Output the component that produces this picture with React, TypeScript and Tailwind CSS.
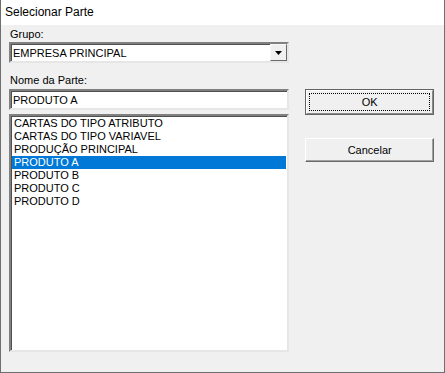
const items = [
  'CARTAS DO TIPO ATRIBUTO',
  'CARTAS DO TIPO VARIAVEL',
  'PRODUÇÃO PRINCIPAL',
  'PRODUTO A',
  'PRODUTO B',
  'PRODUTO C',
  'PRODUTO D'
];

const selected = 'PRODUTO A';

// classic sunken 3D edge
const sunken =
  'border-2 border-t-[#808080] border-l-[#808080] border-b-[#e6e6e6] border-r-[#e6e6e6] shadow-[inset_1px_1px_0_#505050]';

export default function App() {
  return (
    <div className="w-[445px] h-[373px] flex flex-col bg-[#f0f0f0] border-x border-b border-[#6e6e6e] text-[11px] text-black font-['Liberation_Sans',Arial,sans-serif] leading-[13px]">
      {/* Title bar */}
      <div className="h-[25px] bg-white flex items-center pl-[4px] text-[12px]">
        Selecionar Parte
      </div>

      <div className="flex flex-1 pl-[8px] pr-[10px]">
        {/* Left column */}
        <div className="w-[281px] flex flex-col">
          <div className="mt-[3px] h-[14px] pl-[1px]">Grupo:</div>
          <div className={`${sunken} h-[21px] bg-white flex items-center`}>
            <span className="flex-1 pl-[2px] pt-[1px]">EMPRESA PRINCIPAL</span>
            <div className="w-[17px] h-[17px] bg-[#f0f0f0] border border-t-[#f8f8f8] border-l-[#f8f8f8] border-b-[#6a6a6a] border-r-[#6a6a6a] flex items-center justify-center">
              <svg width="7" height="4" viewBox="0 0 7 4">
                <path d="M0 0h7L3.5 4z" fill="#000" />
              </svg>
            </div>
          </div>

          <div className="mt-[8px] h-[18px] pl-[1px] pt-[3px]">Nome da Parte:</div>
          <div className={`${sunken} h-[21px] bg-white flex items-center pl-[2px] pt-[1px]`}>
            PRODUTO A
          </div>

          <div className={`${sunken} mt-[4px] h-[238px] bg-white pt-[1px] pl-[1px] pr-[1px]`}>
            {items.map((item) => (
              <div
                key={item}
                className={
                  item === selected
                    ? 'h-[13px] pl-[2px] bg-[#0078d7] text-white'
                    : 'h-[13px] pl-[2px]'
                }
              >
                {item}
              </div>
            ))}
          </div>
        </div>

        {/* Right column */}
        <div className="ml-[16px] w-[129px] flex flex-col">
          <button className="mt-[64px] h-[26px] border border-[#646464] bg-[#f0f0f0] p-0">
            <div className="h-full border border-t-[#ffffff] border-l-[#ffffff] border-b-[#8a8a8a] border-r-[#8a8a8a] p-[2px]">
              <div className="h-full border border-dotted border-black flex items-center justify-center">
                OK
              </div>
            </div>
          </button>
          <button className="mt-[23px] h-[24px] bg-[#f0f0f0] border border-t-[#ffffff] border-l-[#ffffff] border-b-[#6a6a6a] border-r-[#6a6a6a] shadow-[inset_-1px_-1px_0_#a0a0a0] flex items-center justify-center">
            Cancelar
          </button>
        </div>
      </div>
    </div>
  );
}
